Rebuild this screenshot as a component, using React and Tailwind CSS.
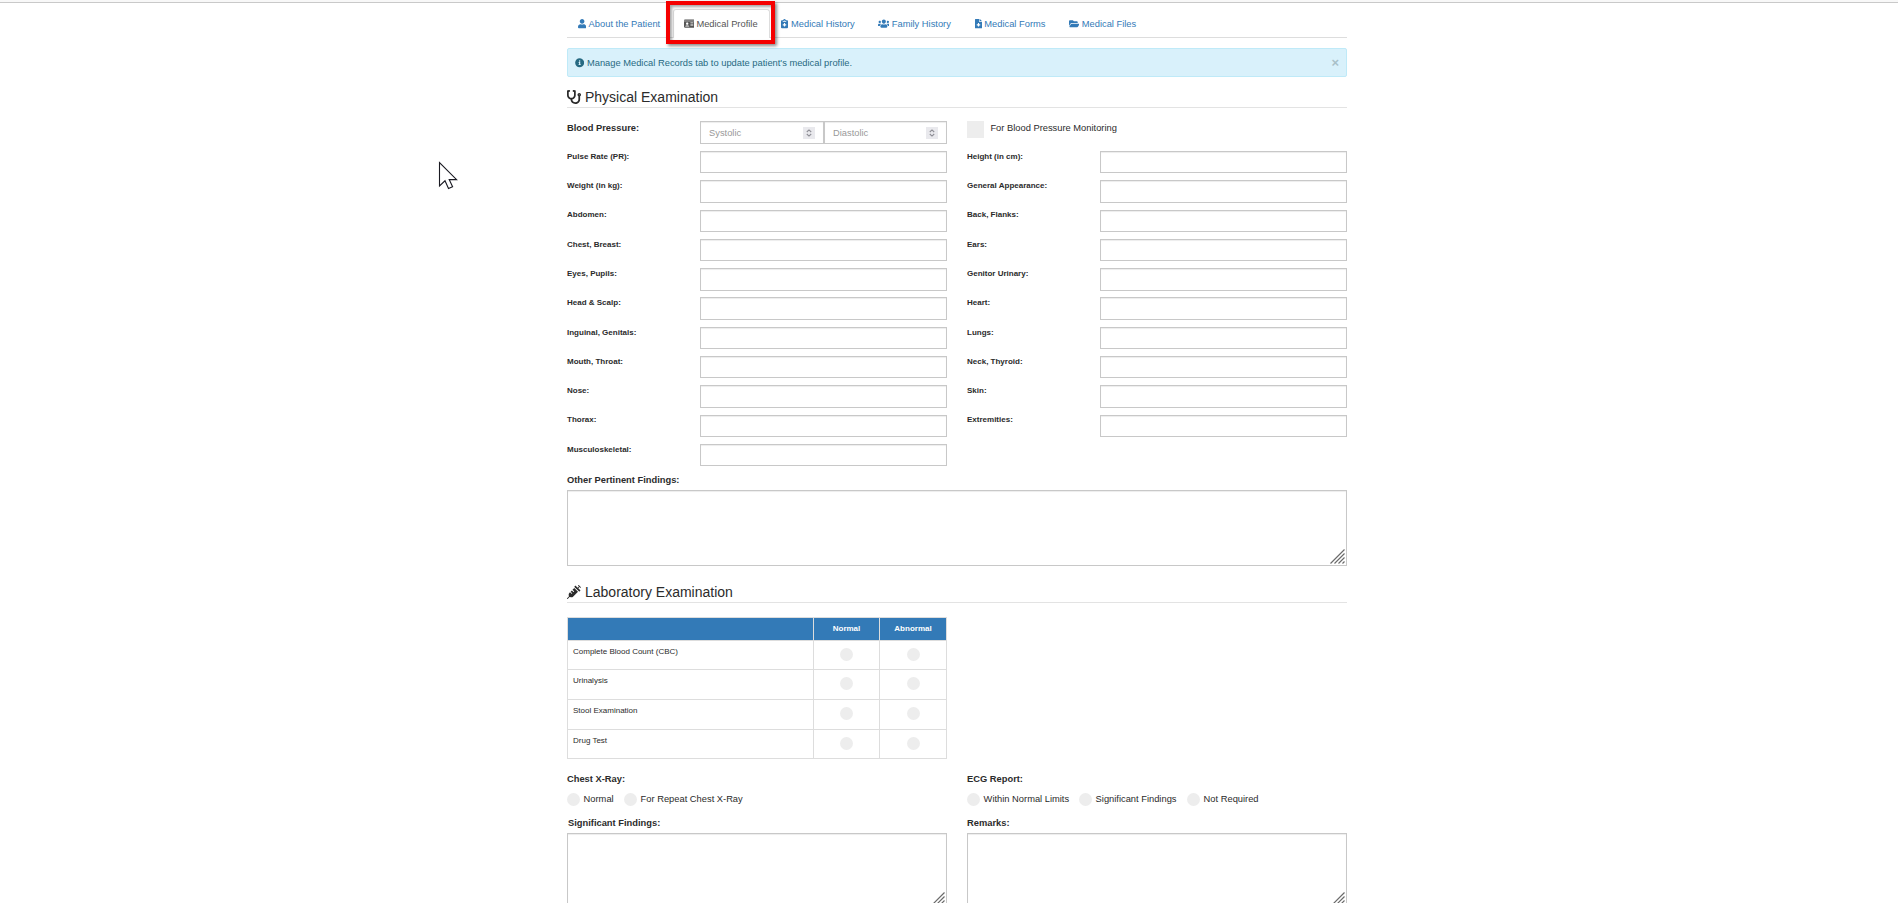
import React from "react";
import {
  FaUser, FaIdCard, FaNotesMedical, FaUsers, FaFileMedical, FaFolderOpen,
  FaInfoCircle, FaStethoscope, FaSyringe,
} from "react-icons/fa";

const tabs = [
  { label: "About the Patient", icon: FaUser, size: "w-[8.2px]", box: "w-[106px] pl-[11px]", gap: "w-[10.6px]" },
  { label: "Medical Profile", icon: FaIdCard, size: "w-[10.5px]", active: true, box: "w-[97px] pl-[9.6px]", gap: "w-[12.8px]" },
  { label: "Medical History", icon: FaNotesMedical, size: "w-[7px]", box: "w-[97px] pl-[11.4px]", gap: "w-[9.6px]" },
  { label: "Family History", icon: FaUsers, size: "w-[11.7px]", box: "w-[97px] pl-[10.6px]", gap: "w-[14.2px]" },
  { label: "Medical Forms", icon: FaFileMedical, size: "w-[7px]", box: "w-[94px] pl-[10.8px]", gap: "w-[9.5px]" },
  { label: "Medical Files", icon: FaFolderOpen, size: "w-[10.5px]", box: "w-[90px] pl-[10.6px]", gap: "w-[13.2px]" },
];

const leftFields = [
  "Pulse Rate (PR):", "Weight (in kg):", "Abdomen:", "Chest, Breast:", "Eyes, Pupils:", "Head & Scalp:",
  "Inguinal, Genitals:", "Mouth, Throat:", "Nose:", "Thorax:", "Musculoskeletal:",
];
const rightFields = [
  "Height (in cm):", "General Appearance:", "Back, Flanks:", "Ears:", "Genitor Urinary:", "Heart:",
  "Lungs:", "Neck, Thyroid:", "Skin:", "Extremities:",
];
const labRows = [
  { name: "Complete Blood Count (CBC)", h: "h-[29px]" },
  { name: "Urinalysis", h: "h-[30px]" },
  { name: "Stool Examination", h: "h-[30px]" },
  { name: "Drug Test", h: "h-[29px]" },
];

const field = "border border-[#c8c8c8] bg-white shadow-[inset_0_1px_1px_rgba(0,0,0,0.075)]";

function Heading({ icon: Icon, children }) {
  return (
    <h4 className="flex h-[22px] items-center border-b border-[#e3e3e3] text-[14px] leading-[20px] text-[#2b2b2b]">
      <Icon className="mr-[4px] size-[14px]" />
      {children}
    </h4>
  );
}

function Spinner() {
  return (
    <span className="flex h-[12px] w-[12px] items-center justify-center bg-[#e9e9ed]">
      <svg width="6" height="8" viewBox="0 0 6 8" fill="none" stroke="#8f8f96" strokeWidth="1.1">
        <path d="M0.8 3 L3 0.9 L5.2 3 M0.8 5 L3 7.1 L5.2 5" />
      </svg>
    </span>
  );
}

function FieldColumn({ names }) {
  return (
    <div className="w-[380px]">
      {names.map((name) => (
        <div key={name} className="flex h-[29.3px]">
          <label className="w-[133px] pt-[0.8px] text-[8px] leading-[10px] font-bold whitespace-nowrap">{name}</label>
          <div className={`h-[22.4px] w-[247px] ${field}`} />
        </div>
      ))}
    </div>
  );
}

function TextArea() {
  return (
    <div className={`flex h-[76px] shrink-0 items-end justify-end pr-px pb-px ${field}`}>
      <svg width="15" height="15" viewBox="0 0 15 15" stroke="#6b6b6b" strokeWidth="1.2">
        <path d="M0.5 14.5 L14.5 0.5 M4.5 14.5 L14.5 4.5 M8.5 14.5 L14.5 8.5 M12.5 14.5 L14.5 12.5" />
      </svg>
    </div>
  );
}

function Dot() {
  return <span className="size-[13px] shrink-0 rounded-full bg-[#ededed]" />;
}

function Radio({ children, width }) {
  return (
    <span className={`flex items-center ${width}`}>
      <Dot />
      <span className="pl-[3.6px] whitespace-nowrap">{children}</span>
    </span>
  );
}

export default function App() {
  return (
    <div className="relative h-[903px] w-[1898px] overflow-hidden bg-white font-['Liberation_Sans',Arial,sans-serif] text-[9.33px] leading-[13px] text-[#2b2b2b]">
      <div className="h-[3px] border-b border-[#c9c9c9] bg-[#f8f8f8]" />
      <main className="ml-[567px] w-[780px]">
        <nav className="flex h-[35px] items-stretch border-b border-[#ddd] pt-[6px]">
          {tabs.map(({ label, icon: Icon, size, active, box, gap }) => (
            <a
              key={label}
              className={`flex items-center whitespace-nowrap ${box} ${
                active
                  ? "-mb-px rounded-t-[3px] border border-b-0 border-[#ddd] bg-white text-[#555]"
                  : "pt-[2px] text-[#337ab7]"
              }`}
            >
              <span className={`flex shrink-0 ${gap}`}><Icon className={`h-[9.33px] shrink-0 ${size}`} /></span>
              {label}
            </a>
          ))}
        </nav>

        <div className="mt-[10px] flex h-[29px] items-center justify-between rounded-[2px] border border-[#bfeaf8] bg-[#d9f1fb] px-[7px] text-[#276a82]">
          <span className="flex items-center pt-px"><FaInfoCircle className="mr-[2.6px] size-[9.33px]" />Manage Medical Records tab to update patient's medical profile.</span>
          <span className="text-[13px] font-bold text-[#a9c0c8]">×</span>
        </div>

        <div className="mt-[9px]"><Heading icon={FaStethoscope}>Physical Examination</Heading></div>

        <div className="mt-[13px] flex h-[30px] gap-[20px]">
          <div className="flex w-[380px]">
            <label className="w-[133px] pt-px font-bold">Blood Pressure:</label>
            <div className="flex h-[23px] w-[247px] text-[#999]">
              <div className={`flex w-[124px] items-center justify-between px-[8px] pt-px ${field}`}>Systolic<Spinner /></div>
              <div className={`flex w-[123px] items-center justify-between px-[8px] pt-px ${field}`}>Diastolic<Spinner /></div>
            </div>
          </div>
          <div className="flex">
            <span className="size-[17px] bg-[#ededed]" />
            <span className="pt-px pl-[6.4px]">For Blood Pressure Monitoring</span>
          </div>
        </div>

        <div className="flex gap-[20px]">
          <FieldColumn names={leftFields} />
          <FieldColumn names={rightFields} />
        </div>

        <label className="block h-[17px] pt-px font-bold">Other Pertinent Findings:</label>
        <TextArea />

        <div className="mt-[15px]"><Heading icon={FaSyringe}>Laboratory Examination</Heading></div>

        <table className="mt-[14px] w-[380px] table-fixed border-collapse text-[8px] leading-[10px]">
          <colgroup><col className="w-[246px]" /><col className="w-[66px]" /><col className="w-[67px]" /></colgroup>
          <thead>
            <tr className="h-[23px] bg-[#337ab7] text-white">
              <th className="border border-[#ddd] p-0" />
              <th className="border border-[#ddd] p-0 pb-px">Normal</th>
              <th className="border border-[#ddd] p-0 pb-px">Abnormal</th>
            </tr>
          </thead>
          <tbody>
            {labRows.map(({ name, h }) => (
              <tr key={name} className={h}>
                <td className="border border-[#ddd] p-0 pt-[6px] pl-[5px] align-top">{name}</td>
                <td className="border border-[#ddd] p-0 pb-[2px]"><div className="flex justify-center"><Dot /></div></td>
                <td className="border border-[#ddd] p-0 pb-[2px]"><div className="flex justify-center"><Dot /></div></td>
              </tr>
            ))}
          </tbody>
        </table>

        <div className="mt-[14px] flex gap-[20px]">
          <section className="w-[380px]">
            <h5 className="font-bold">Chest X-Ray:</h5>
            <div className="mt-[7px] flex">
              <Radio width="w-[57px]">Normal</Radio>
              <Radio width="w-[130px]">For Repeat Chest X-Ray</Radio>
            </div>
            <label className="mt-[11px] block h-[16px] pl-px font-bold">Significant Findings:</label>
            <TextArea />
          </section>
          <section className="w-[380px]">
            <h5 className="font-bold">ECG Report:</h5>
            <div className="mt-[7px] flex">
              <Radio width="w-[112px]">Within Normal Limits</Radio>
              <Radio width="w-[108px]">Significant Findings</Radio>
              <Radio width="w-[90px]">Not Required</Radio>
            </div>
            <label className="mt-[11px] block h-[16px] font-bold">Remarks:</label>
            <TextArea />
          </section>
        </div>
      </main>

      <div className="absolute top-[1px] left-[666px] h-[43px] w-[109px] border-4 border-[#f50000] shadow-[2px_2px_3px_rgba(0,0,0,0.45),inset_2px_2px_3px_rgba(0,0,0,0.35)]" />
      <svg className="absolute top-[161px] left-[438px]" width="21" height="30" viewBox="0 0 21 30" fill="#fff" stroke="#1a1a22" strokeWidth="1.1">
        <path d="M1.5 1.5 V25 L7 19.8 L10.5 27.6 L14.6 25.8 L11.2 18.6 H18.6 Z" />
      </svg>
    </div>
  );
}
